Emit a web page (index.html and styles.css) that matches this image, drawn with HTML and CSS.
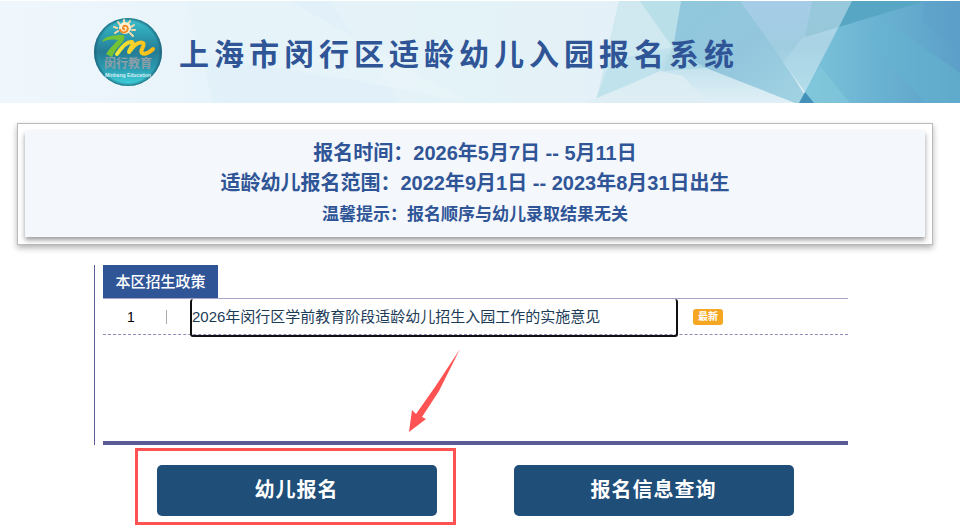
FILE: index.html
```html
<!DOCTYPE html>
<html lang="zh-CN">
<head>
    <meta charset="utf-8">
    <title>上海市闵行区适龄幼儿入园报名系统</title>
    <link rel="stylesheet" href="styles.css">
</head>
<body>
    <header class="header">
        <svg class="header-bg" viewBox="0 0 960 102" preserveAspectRatio="none" aria-hidden="true">
            <defs>
                <linearGradient id="base" x1="0" y1="0" x2="1" y2="0">
                    <stop offset="0" stop-color="#f0f7fc"/>
                    <stop offset="0.25" stop-color="#e6f3fa"/>
                    <stop offset="0.5" stop-color="#e4f3f8"/>
                    <stop offset="0.65" stop-color="#e4f0f7"/>
                </linearGradient>
                <linearGradient id="mid" x1="0" y1="0" x2="1" y2="1">
                    <stop offset="0" stop-color="#90c8dc"/>
                    <stop offset="0.5" stop-color="#93c6dd"/>
                    <stop offset="1" stop-color="#a2d4e3"/>
                </linearGradient>
                <linearGradient id="ice" x1="0" y1="0" x2="0" y2="1">
                    <stop offset="0" stop-color="#a6cde8"/>
                    <stop offset="0.5" stop-color="#a0cce0"/>
                    <stop offset="1" stop-color="#b4deea"/>
                </linearGradient>
                <linearGradient id="deep" x1="0" y1="0" x2="1" y2="0">
                    <stop offset="0" stop-color="#7cc3da"/>
                    <stop offset="0.5" stop-color="#69b1d1"/>
                    <stop offset="1" stop-color="#5c9fc8"/>
                </linearGradient>
                <linearGradient id="pale" x1="0" y1="0" x2="0" y2="1">
                    <stop offset="0" stop-color="#c4e2ee"/>
                    <stop offset="1" stop-color="#e0f0f6"/>
                </linearGradient>
            </defs>
            <rect width="960" height="102" fill="url(#base)"/>
            <polygon points="187,0 330,0 400,102 213,102" fill="#dff0f8" opacity="0.6"/>
            <polygon points="187,0 290,0 470,102 360,80 200,55" fill="#eff8fa" opacity="0.3"/>
            <polygon points="619,0 700,0 740,102 596,102" fill="#c6e3ed"/>
            <polygon points="619,0 640,0 674,48 650,102 596,102" fill="#d0e8f0"/>
            <polygon points="640,0 681,0 673,47" fill="#b9dfe8"/>
            <polygon points="673,46 662,73 596,98 610,60" fill="#b9dfea" opacity="0.7"/>
            <polygon points="681,0 745,0 810,102 700,102 673,47" fill="url(#mid)"/>
            <polygon points="673,46 700,66 662,73" fill="#a4d2df"/>
            <polygon points="673,46 707,68 740,102 690,102 655,72" fill="#b6dde8" opacity="0.7"/>
            <polygon points="585,102 660,70 706,67 795,102" fill="url(#pale)"/>
            <polygon points="660,70 683,75 708,102 590,102" fill="#deeef4" opacity="0.8"/>
            <polygon points="740,0 852,0 805,91" fill="url(#ice)"/>
            <polygon points="812,0 852,0 838,27 805,36" fill="#8fc5d3" opacity="0.6"/>
            <polygon points="802,37 838,26 805,91 783,62" fill="#b4dbe9" opacity="0.5"/>
            <polygon points="852,0 960,0 960,102 812,102 805,91" fill="url(#deep)"/>
            <polygon points="852,0 925,0 839,26" fill="#57a6c3"/>
            <polygon points="866,35 885,19 960,72 960,102 925,102" fill="#63b4d0" opacity="0.5"/>
            <polygon points="925,0 960,0 960,55 922,20" fill="#5c9fca" opacity="0.4"/>
            <polygon points="820,65 850,102 812,102 805,91" fill="#84cadc" opacity="0.6"/>
            <polygon points="805,91 814,102 799,102" fill="#4390b9"/>
        </svg>
        <div class="brand">
            <svg class="logo" viewBox="0 0 68 68" role="img" aria-label="闵行教育">
                <defs>
                    <linearGradient id="ball" x1="0" y1="0" x2="0" y2="1">
                        <stop offset="0" stop-color="#3fc3cf"/>
                        <stop offset="0.2" stop-color="#2fa5b8"/>
                        <stop offset="0.5" stop-color="#257b94"/>
                        <stop offset="0.75" stop-color="#2b9db2"/>
                        <stop offset="1" stop-color="#42d5de"/>
                    </linearGradient>
                    <radialGradient id="rim">
                        <stop offset="0.9" stop-color="#1c5c74" stop-opacity="0"/>
                        <stop offset="1" stop-color="#1c5c74" stop-opacity="0.8"/>
                    </radialGradient>
                    <linearGradient id="stroke-m" x1="0" y1="0" x2="1" y2="0">
                        <stop offset="0" stop-color="#f0e83a"/>
                        <stop offset="1" stop-color="#fcb813"/>
                    </linearGradient>
                </defs>
                <circle cx="34" cy="34" r="34" fill="url(#ball)"/>
                <circle cx="34" cy="34" r="34" fill="url(#rim)"/>
                <g stroke="#fbd9a8" stroke-width="2" stroke-linecap="round">
                    <path d="M30 2v3M24 4l2 3M20 9l3 1M21 15l3-2M36 3l-2 3M40 7l-3 2M41 12h-3M39 18l-3-3"/>
                </g>
                <circle cx="31" cy="10" r="6" fill="#fff0cf"/>
                <path d="M31 11c-2 1-3-1-1-3 3-1 5 2 3 5-3 3-7 1-7-2" fill="none" stroke="#f28c28" stroke-width="2"/>
                <path d="M8 24C10 19 16 17 29 17C32 18 30 23 27 26C23 30 20 34 18 39L12 36C15 31 20 26 24 22C17 21 12 22 8 24Z" fill="#74c335"/>
                <path d="M23 36C27 30 33 23 38 24C41 26 35 31 35 34C40 27 45 23 49 25C52 27 45 33 48 35C51 37 56 34 59 31" fill="none" stroke="url(#stroke-m)" stroke-width="4" stroke-linecap="round" stroke-linejoin="round"/>
                <text class="logo-name" x="34" y="50" text-anchor="middle">闵行教育</text>
                <text class="logo-sub" x="34" y="59" text-anchor="middle">Minhang Education</text>
            </svg>
            <h1>上海市闵行区适龄幼儿入园报名系统</h1>
        </div>
    </header>

    <main class="main">
        <section class="notice">
            <div class="notice-body">
                <p>报名时间：2026年5月7日 -- 5月11日</p>
                <p>适龄幼儿报名范围：2022年9月1日 -- 2023年8月31日出生</p>
                <p class="tip">温馨提示：报名顺序与幼儿录取结果无关</p>
            </div>
        </section>

        <div class="container">
            <section class="policy">
                <h2>本区招生政策</h2>
                <ul class="policy-list">
                    <li>
                        <span class="num">1</span>
                        <span class="sep"></span>
                        <a href="#">2026年闵行区学前教育阶段适龄幼儿招生入园工作的实施意见</a>
                        <span class="badge">最新</span>
                    </li>
                </ul>
                <svg class="arrow" viewBox="0 0 52 84" aria-hidden="true">
                    <path d="M51 0L30 42L13 68L17 70L0 83L3 61L7 65L26 38Z" fill="#ff5353"/>
                </svg>
            </section>

            <div class="actions">
                <div class="action marked">
                    <button type="button" class="btn">幼儿报名</button>
                </div>
                <div class="action">
                    <button type="button" class="btn">报名信息查询</button>
                </div>
            </div>
        </div>
    </main>
</body>
</html>
```

FILE: styles.css
```css
* {
    box-sizing: border-box;
    margin: 0;
    padding: 0;
}

body {
    padding-top: 1px;
    font-family: "Liberation Sans", "Noto Sans CJK SC", sans-serif;
    background: #fff;
    color: #000;
}

.header {
    position: relative;
    overflow: hidden;
}

.header-bg {
    position: absolute;
    top: 0;
    left: 0;
    width: 100%;
    height: 100%;
}

.brand {
    position: relative;
    display: flex;
    align-items: center;
    gap: 17px;
    padding: 17px 0 17px 94px;
}

.logo {
    width: 68px;
    height: 68px;
}

.logo-name {
    font-size: 12px;
    font-weight: bold;
    fill: #8d9fa8;
}

.logo-sub {
    font-size: 5px;
    font-weight: bold;
    fill: #d5eef2;
}

.brand h1 {
    color: #2f5597;
    font-size: 30px;
    font-weight: bold;
    letter-spacing: 5px;
    white-space: nowrap;
}

.main {
    margin-right: 10px;
}

.notice {
    margin: 20px 17px;
    padding: 7px;
    border: 1px solid #bbb;
    box-shadow: 0 3px 6px rgba(0, 0, 0, 0.3);
}

.notice-body {
    padding: 7px 0;
    background: #f4f7fc;
    box-shadow: 0 3px 5px rgba(0, 0, 0, 0.4);
    color: #2f5597;
    font-size: 20px;
    font-weight: bold;
    line-height: 30px;
    text-align: center;
}

.notice-body .tip {
    margin-top: 2px;
    font-size: 17px;
}

.container {
    padding: 0 102px;
}

.policy {
    position: relative;
    min-height: 180px;
    margin-left: -8px;
    padding-left: 8px;
    border-left: 1px solid #5b5b95;
}

/* bottom bar starts under the list, not under the side line */
.policy::after {
    content: "";
    position: absolute;
    left: 8px;
    right: 0;
    bottom: 0;
    height: 4px;
    background: #5b5b95;
}

.policy h2 {
    width: 115px;
    background: #2f5597;
    color: #fff;
    font-size: 15px;
    font-weight: 500;
    line-height: 33px;
    text-align: center;
}

.policy-list {
    list-style: none;
    border-top: 1px solid #a5a5cb;
}

.policy-list li {
    display: grid;
    grid-template-columns: 56px 31px 1fr 170px;
    align-items: center;
    height: 36px;
    border-bottom: 1px dashed #8c8cba;
    font-size: 15px;
}

.num {
    font-size: 14px;
    text-align: center;
}

.sep {
    width: 1px;
    height: 14px;
    margin-left: 7px;
    background: #aaa;
}

.policy-list a {
    height: 38px;
    margin-bottom: -3px;
    border: 2px solid #111;
    border-top: 0;
    border-radius: 3px;
    color: #1c3b57;
    line-height: 35px;
    text-decoration: none;
    white-space: nowrap;
}

.badge {
    justify-self: start;
    margin-left: 15px;
    padding: 0 5px;
    border-radius: 3px;
    background: #f5a623;
    color: #fff;
    font-size: 10px;
    font-weight: bold;
    line-height: 16px;
}

.arrow {
    position: absolute;
    top: 84px;
    left: 314px;
    width: 52px;
    height: 84px;
}

.actions {
    display: flex;
    justify-content: center;
    gap: 77px;
    padding: 20px 0 14px;
}

.action {
    position: relative;
    flex: 0 1 280px;
}

.marked::before {
    content: "";
    position: absolute;
    top: -17px;
    right: -19px;
    bottom: -9px;
    left: -22px;
    border: 3px solid #ff5353;
}

.btn {
    position: relative;
    width: 100%;
    height: 51px;
    padding-bottom: 4px;
    border: none;
    border-radius: 5px;
    background: #1f4e79;
    color: #fff;
    font-family: inherit;
    font-size: 20px;
    font-weight: bold;
    letter-spacing: 1px;
    cursor: pointer;
}

.btn:hover {
    background: #2f5597;
}
```
